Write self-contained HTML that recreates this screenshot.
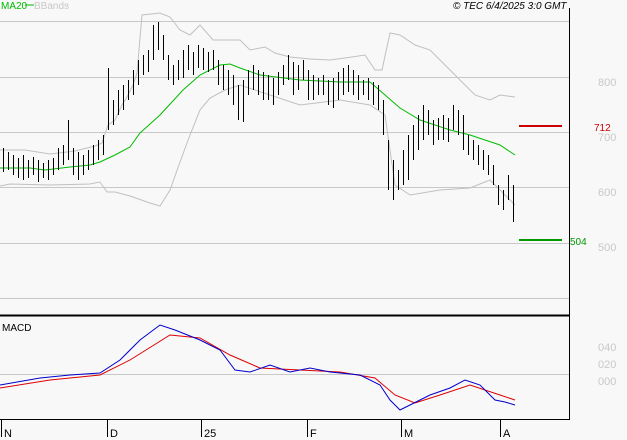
<!DOCTYPE html><html><head><style>body{margin:0;background:#f8f8f8}svg{display:block}text{font-family:"Liberation Sans",sans-serif;font-size:11px}</style></head><body>
<svg width="627" height="440" viewBox="0 0 627 440">
<rect width="627" height="440" fill="#f8f8f8"/>
<g stroke="#c8c8c8" stroke-width="1">
<path d="M0 21.5H569M0 77.5H569M0 132.5H569M0 187.5H569M0 243.5H569M0 298.5H569M0 374.5H569"/>
</g>
<g fill="#c8c8c8" style="font-size:10px"><text x="598" y="86">800</text><text x="598" y="141">700</text><text x="598" y="196">600</text><text x="598" y="251">500</text><text x="598" y="351">040</text><text x="598" y="368">020</text><text x="598" y="385">000</text></g>
<path d="M519 126H562" stroke="#cc0000" stroke-width="2"/><text x="594" y="131" fill="#cc0000" style="font-size:10px">712</text>
<path d="M519 240H562" stroke="#009900" stroke-width="2"/><text x="570" y="245" fill="#009900" style="font-size:10px">504</text>
<g fill="none" stroke="#c0c0c0">
<polyline points="0,150 25,150 50,154 75,151 95,146 102,143 108,125 115,120 122,105 127,97 133,85 137,73 142,15 160,13 170,17 180,30 190,35 200,25 213,40 240,40 250,50 265,47 275,53 290,57 310,59 330,60 345,58 365,55 375,70 382,70 390,33 400,35 415,45 430,50 445,65 460,80 475,95 490,100 500,95 515,97"/>
<polyline points="0,186 10,184 50,185 90,184 100,182 107,192 115,192 130,196 150,203 160,206 170,190 180,162 190,135 200,110 210,98 225,90 240,85 270,95 300,105 340,100 370,105 385,115 395,185 410,195 440,190 470,188 490,180 500,190 515,205"/>
</g>
<polyline fill="none" stroke="#00bb00" points="0,168 30,168 45,170 70,167 90,165 100,162 115,155 130,147 140,133 160,115 183,90 200,75 220,65 230,64 240,68 260,75 300,80 340,82 370,82 385,95 400,108 420,120 450,130 470,135 485,140 500,145 515,155"/>
<path transform="translate(0.5,0)" stroke="#000" fill="none" d="M3 148V172M8 152V170M13 155V175M18 158V178M23 155V180M28 160V178M33 157V175M38 160V182M43 163V178M48 160V180M53 158V175M58 148V170M63 145V165M68 120V160M73 148V175M78 152V180M83 155V175M88 150V170M93 145V165M98 140V160M103 135V155M108 68V130M113 100V125M118 90V115M123 85V110M128 80V100M133 70V95M138 60V85M143 55V75M148 50V72M153 25V60M158 22V50M163 35V60M168 55V80M173 65V85M178 60V80M183 50V78M188 45V70M193 52V75M198 45V68M203 48V70M208 52V72M213 50V70M218 60V85M223 65V90M228 70V95M233 75V105M238 85V120M243 80V122M248 70V95M253 65V90M258 70V95M263 72V100M268 75V100M273 78V105M278 72V95M283 65V85M288 55V80M293 62V95M298 65V90M303 60V80M308 70V100M313 75V100M318 78V95M323 75V95M328 80V105M333 78V108M338 72V100M343 68V95M348 65V92M353 70V95M358 75V100M363 80V95M368 78V100M373 82V105M378 85V110M383 100V135M388 140V190M393 160V200M398 170V190M403 150V185M408 135V180M413 125V160M418 115V150M423 105V140M428 110V135M433 120V145M438 118V140M443 115V140M448 118V142M453 105V130M458 110V135M463 115V150M468 135V155M473 140V160M478 145V165M483 150V170M488 155V175M493 165V185M498 185V205M503 190V210M508 175V200M513 185V222"/>
<polyline fill="none" stroke="#dd0000" points="0,388 50,380 100,375 130,360 170,335 200,338 230,355 260,368 300,370 340,372 375,378 395,395 415,403 440,395 470,385 500,395 515,400"/>
<polyline fill="none" stroke="#0000cc" points="0,385 40,378 70,375 100,373 120,360 140,340 160,325 175,330 200,340 220,350 235,370 250,372 270,365 290,372 310,368 330,372 360,375 380,385 390,400 400,410 410,405 430,395 450,388 465,380 480,385 495,400 505,402 515,405"/>
<path d="M569.5 8V419.5H0" stroke="#000" fill="none"/>
<path d="M0 315.5H570" stroke="#000" stroke-width="2"/>
<g stroke="#000"><path d="M1.5 419V437M107.5 419V437M201.5 419V437M307.5 419V437M401.5 419V437M500.5 419V437"/></g>
<g fill="#000"><text x="4" y="437">N</text><text x="110" y="437">D</text><text x="204" y="437">25</text><text x="310" y="437">F</text><text x="404" y="437">M</text><text x="503" y="437">A</text>
<text x="2" y="331" style="font-size:10px">MACD</text>
<text x="453" y="9" style="font-size:10px;font-style:italic">© TEC 6/4/2025 3:0 GMT</text></g>
<text x="1" y="9" fill="#00bb00" style="font-size:10px">MA20</text><path d="M25 5H34" stroke="#00bb00"/>
<text x="34" y="9" fill="#c8c8c8" style="font-size:10px">BBands</text><path d="M67 5H68" stroke="#c8c8c8"/>
</svg></body></html>
